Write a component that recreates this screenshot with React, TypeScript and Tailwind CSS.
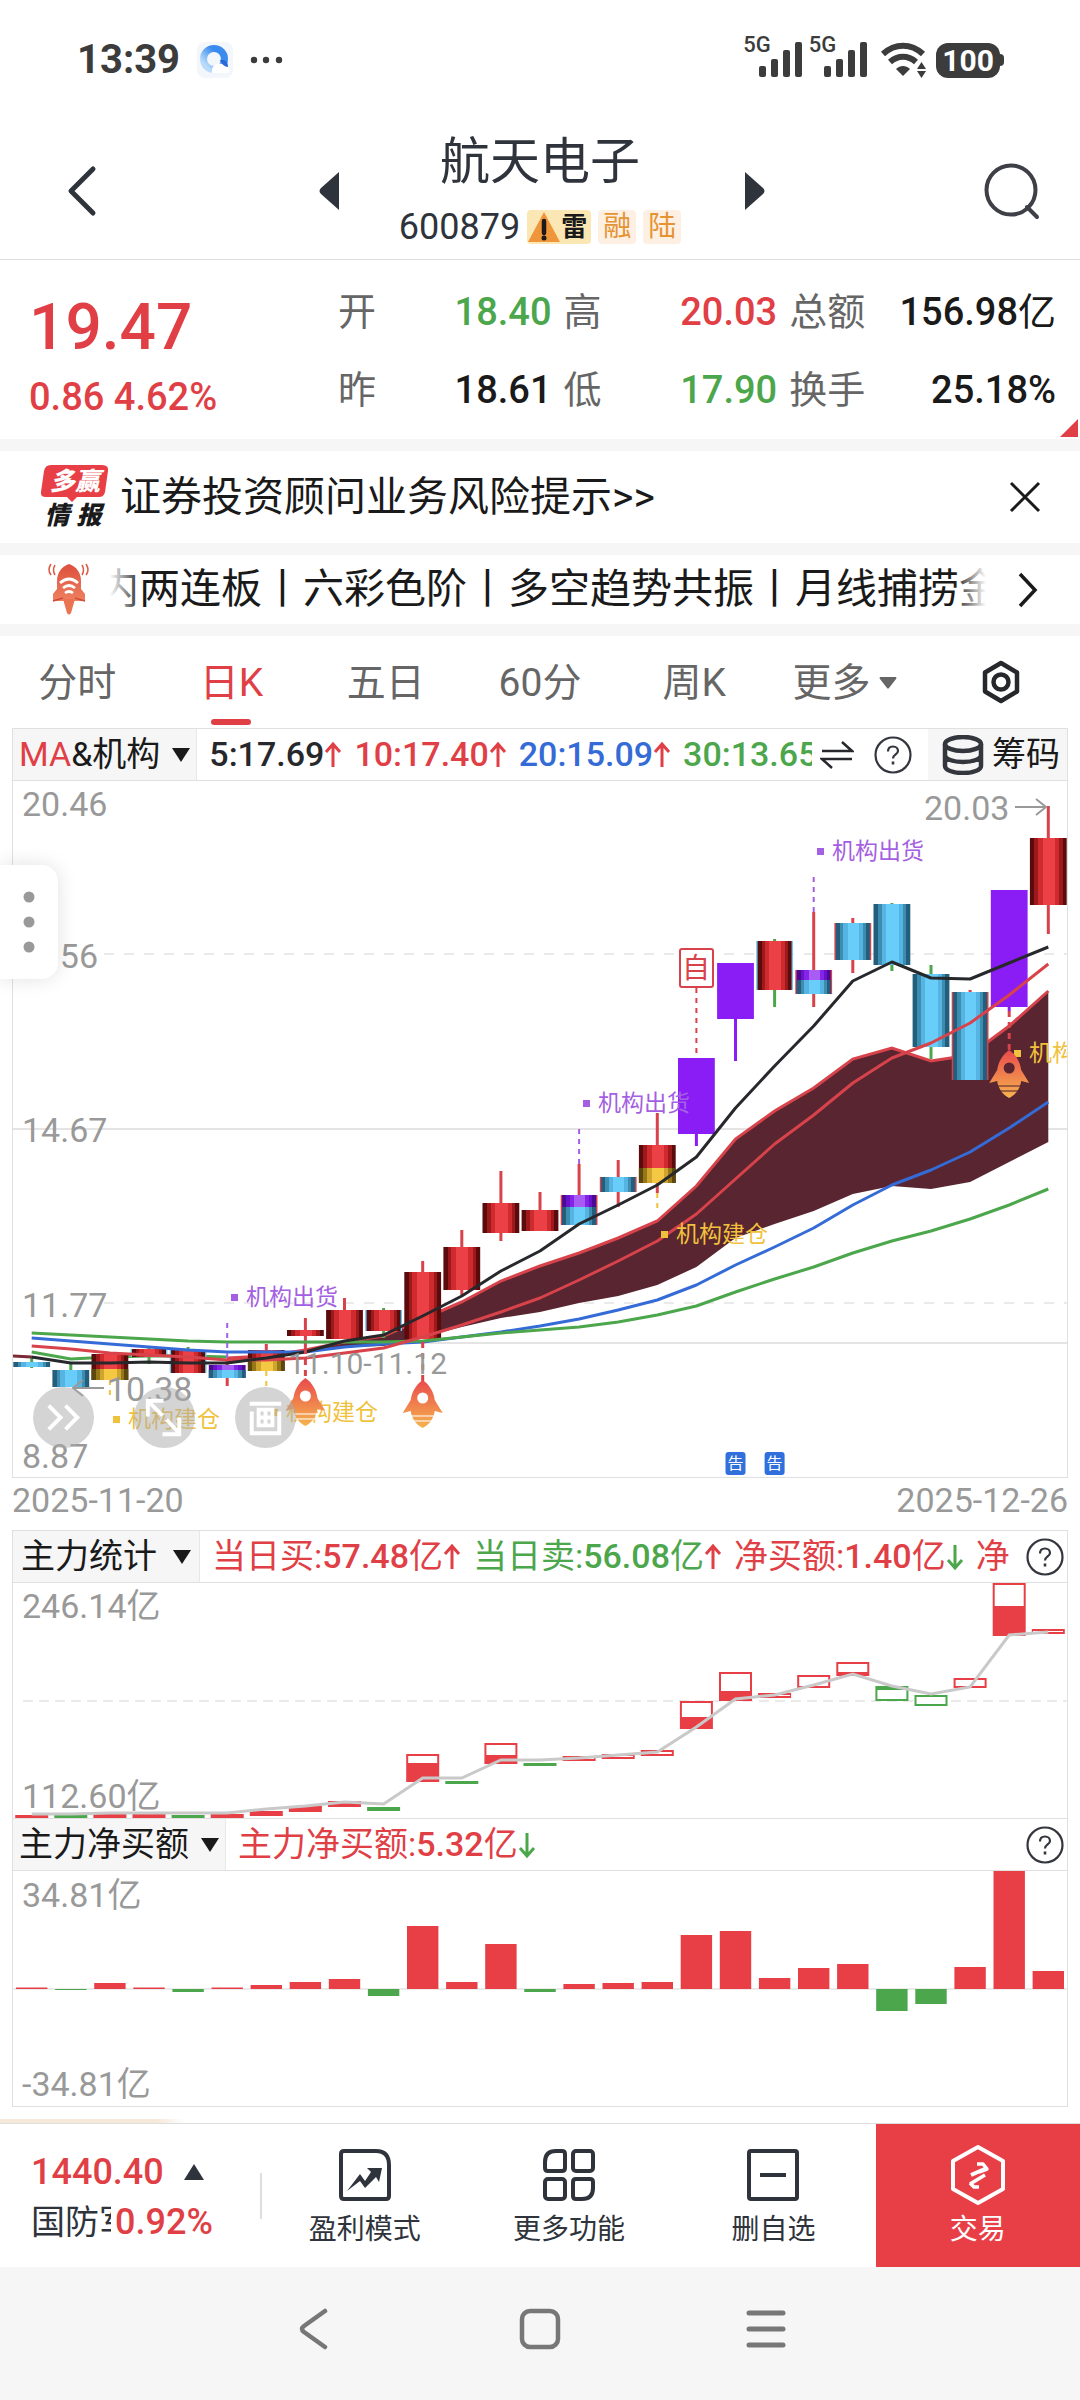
import React, { useState } from 'react';

type Tone = 'red' | 'blue' | 'purple' | 'violet' | 'yellow';

interface Candle {
  high: number;
  low: number;
  top: number;
  bottom: number;
  tone: Tone;
  wick: string;
  edge?: string;
  // Second colour block, starts at `split`
  lower?: Tone;
  split?: number;
}

interface FlowBox {
  top: number;
  bottom: number;
  up: boolean;
  fill?: [number, number];
}

const RED = '#e83f47';
const LINE_RED = '#d8434b';
const GREEN = '#4ca64c';
const BLUE = '#356bd6';
const CYAN = '#6cc8ee';
const PURPLE = '#8a1cf6';
const LILAC = '#a45fe2';
const GOLD = '#f0c13c';
const GRID = '#e4e4e4';

const FIRST_X = 31.7;
const STEP = 39.1;
const xAt = (i: number) => FIRST_X + STEP * i;

const candles: Candle[] = [
  { high: 1356, low: 1368, top: 1362, bottom: 1367, tone: 'blue', wick: GREEN },
  { high: 1362, low: 1387, top: 1370, bottom: 1387, tone: 'blue', wick: GREEN },
  { high: 1352, low: 1380, top: 1354, bottom: 1380, tone: 'red', wick: LINE_RED, lower: 'yellow', split: 1369 },
  { high: 1348, low: 1364, top: 1349, bottom: 1357, tone: 'red', wick: GREEN, edge: CYAN },
  { high: 1347, low: 1373, top: 1350, bottom: 1373, tone: 'red', wick: GREEN, edge: CYAN },
  { high: 1360, low: 1386, top: 1365, bottom: 1378, tone: 'violet', wick: LINE_RED, lower: 'blue', split: 1370 },
  { high: 1344, low: 1371, top: 1350, bottom: 1371, tone: 'red', wick: LINE_RED, lower: 'yellow', split: 1361 },
  { high: 1318, low: 1348, top: 1330, bottom: 1336, tone: 'red', wick: LINE_RED },
  { high: 1298, low: 1339, top: 1310, bottom: 1339, tone: 'red', wick: LINE_RED },
  { high: 1308, low: 1338, top: 1310, bottom: 1331, tone: 'red', wick: GREEN, edge: CYAN },
  { high: 1261, low: 1339, top: 1272, bottom: 1339, tone: 'red', wick: LINE_RED },
  { high: 1230, low: 1295, top: 1247, bottom: 1290, tone: 'red', wick: LINE_RED },
  { high: 1171, low: 1241, top: 1203, bottom: 1233, tone: 'red', wick: LINE_RED },
  { high: 1192, low: 1231, top: 1210, bottom: 1231, tone: 'red', wick: LINE_RED },
  { high: 1164, low: 1225, top: 1195, bottom: 1225, tone: 'violet', wick: LINE_RED, edge: LINE_RED, lower: 'blue', split: 1207 },
  { high: 1160, low: 1207, top: 1177, bottom: 1192, tone: 'blue', wick: LINE_RED, edge: LINE_RED },
  { high: 1113, low: 1193, top: 1145, bottom: 1183, tone: 'red', wick: LINE_RED, lower: 'yellow', split: 1168 },
  { high: 1058, low: 1146, top: 1058, bottom: 1134, tone: 'purple', wick: PURPLE },
  { high: 963, low: 1061, top: 963, bottom: 1019, tone: 'purple', wick: PURPLE },
  { high: 939, low: 1007, top: 941, bottom: 990, tone: 'red', wick: GREEN, edge: CYAN },
  { high: 912, low: 1007, top: 970, bottom: 994, tone: 'violet', wick: LINE_RED, edge: LINE_RED, lower: 'blue', split: 980 },
  { high: 918, low: 973, top: 923, bottom: 960, tone: 'blue', wick: LINE_RED, edge: LINE_RED },
  { high: 903, low: 971, top: 904, bottom: 965, tone: 'blue', wick: GREEN },
  { high: 965, low: 1059, top: 974, bottom: 1047, tone: 'blue', wick: GREEN },
  { high: 990, low: 1080, top: 992, bottom: 1080, tone: 'blue', wick: LINE_RED, edge: LINE_RED },
  { high: 890, low: 1011, top: 890, bottom: 1007, tone: 'purple', wick: PURPLE },
  { high: 806, low: 934, top: 838, bottom: 905, tone: 'red', wick: LINE_RED },
];

const ma5 = [1357, 1363, 1363, 1362, 1363, 1363, 1358, 1352, 1341, 1335, 1316, 1296, 1271, 1251, 1224, 1205, 1185, 1157, 1108, 1066, 1026, 981, 962, 978, 979, 963, 947];
const ma10 = [1346, 1349, 1353, 1355, 1357, 1360, 1360, 1358, 1353, 1348, 1337, 1325, 1312, 1298, 1280, 1261, 1241, 1214, 1179, 1144, 1115, 1083, 1058, 1043, 1023, 995, 964];
const ma20 = [1338, 1341, 1344, 1347, 1350, 1352, 1352, 1352, 1347, 1344, 1342, 1337, 1332, 1326, 1319, 1310, 1300, 1285, 1265, 1247, 1228, 1205, 1185, 1170, 1152, 1128, 1102];
const ma30 = [1333, 1335, 1337, 1339, 1341, 1342, 1342, 1342, 1342, 1342, 1341, 1337, 1333, 1330, 1327, 1322, 1315, 1306, 1292, 1279, 1267, 1253, 1241, 1231, 1219, 1205, 1189];

// The dark band starts at the sixth candle
const BAND_START = 5;
const bandTop = [1358, 1356, 1350, 1342, 1336, 1319, 1302, 1281, 1266, 1253, 1238, 1221, 1186, 1139, 1111, 1088, 1059, 1048, 1061, 1055, 1026, 991];
const bandBottom = [1363, 1358, 1353, 1347, 1346, 1337, 1327, 1318, 1312, 1303, 1296, 1285, 1267, 1238, 1224, 1211, 1194, 1186, 1189, 1182, 1162, 1142];

const flowBoxes: FlowBox[] = [
  { top: 1816, bottom: 1818, up: true, fill: [1816, 1818] },
  { top: 1815, bottom: 1818, up: false, fill: [1815, 1818] },
  { top: 1814, bottom: 1817, up: true, fill: [1814, 1817] },
  { top: 1814, bottom: 1817, up: true, fill: [1814, 1817] },
  { top: 1816, bottom: 1818, up: false, fill: [1816, 1818] },
  { top: 1815, bottom: 1817, up: true, fill: [1815, 1817] },
  { top: 1812, bottom: 1815, up: true, fill: [1812, 1815] },
  { top: 1807, bottom: 1811, up: true, fill: [1808, 1811] },
  { top: 1802, bottom: 1806, up: true, fill: [1803, 1806] },
  { top: 1808, bottom: 1810, up: false, fill: [1808, 1810] },
  { top: 1755, bottom: 1781, up: true, fill: [1763, 1781] },
  { top: 1782, bottom: 1783, up: false, fill: [1782, 1783] },
  { top: 1744, bottom: 1763, up: true, fill: [1755, 1763] },
  { top: 1764, bottom: 1765, up: false, fill: [1764, 1765] },
  { top: 1757, bottom: 1760, up: true },
  { top: 1755, bottom: 1758, up: true },
  { top: 1751, bottom: 1755, up: true },
  { top: 1702, bottom: 1728, up: true, fill: [1717, 1728] },
  { top: 1673, bottom: 1700, up: true, fill: [1691, 1700] },
  { top: 1694, bottom: 1697, up: true },
  { top: 1676, bottom: 1687, up: true },
  { top: 1663, bottom: 1675, up: true, fill: [1672, 1675] },
  { top: 1687, bottom: 1700, up: false, fill: [1687, 1690] },
  { top: 1696, bottom: 1705, up: false },
  { top: 1679, bottom: 1687, up: true },
  { top: 1584, bottom: 1635, up: true, fill: [1606, 1635] },
  { top: 1630, bottom: 1633, up: true },
];
const flowLine = [1814, 1814, 1813, 1813, 1813, 1813, 1809, 1806, 1802, 1804, 1778, 1778, 1760, 1760, 1758, 1755, 1752, 1727, 1699, 1695, 1685, 1674, 1686, 1694, 1687, 1635, 1632];

const netBars = [1.5, -1, 6, 1.5, -3, 1.5, 4, 7, 10, -7, 63, 7, 45, -3, 5, 6, 7, 54, 58, 11, 21, 25, -22, -15, 22, 118, 18];

const toPoints = (ys: number[], start = 0) => ys.map((y, i) => `${xAt(i + start)},${y}`).join(' ');
const bandShape = `${toPoints(bandTop, BAND_START)} ${bandBottom
  .map((y, i) => `${xAt(i + BAND_START)},${y}`)
  .reverse()
  .join(' ')}`;

const gradients: Record<Exclude<Tone, 'purple'>, string[]> = {
  red: ['#5c0b0d', '#9c191c', '#cf2b2e', '#ea4046'],
  blue: ['#235f7c', '#3c8db0', '#56b4e2', '#69cdfa'],
  violet: ['#4a0a96', '#6a12c8', '#8424ea', '#a85cf4'],
  yellow: ['#5c480c', '#957618', '#cfa52e', '#f4c842'],
};

const ToneGradient = ({ tone }: { tone: Exclude<Tone, 'purple'> }) => {
  const [a, b, c, d] = gradients[tone];
  const bands: [string, number, number][] = [
    [a, 0, 12], [b, 12, 22], [c, 22, 35], [d, 35, 68], [c, 68, 80], [b, 80, 89], [a, 89, 100],
  ];
  return (
    <linearGradient id={`tone-${tone}`}>
      {bands.map(([color, from, to]) => (
        <React.Fragment key={from}>
          <stop offset={`${from}%`} stopColor={color} />
          <stop offset={`${to}%`} stopColor={color} />
        </React.Fragment>
      ))}
    </linearGradient>
  );
};

const toneFill = (tone: Tone) => (tone === 'purple' ? PURPLE : `url(#tone-${tone})`);

const Signal = ({ x, y, kind }: { x: number; y: number; kind: 'buy' | 'sell' }) => (
  <g fill={kind === 'sell' ? LILAC : GOLD}>
    <rect x={x} y={y - 3} width="7" height="7" />
    <text x={x + 15} y={y + 8} fontSize="23">{kind === 'sell' ? '机构出货' : '机构建仓'}</text>
  </g>
);

const Rocket = ({ x, y, hole }: { x: number; y: number; hole: string }) => (
  <g transform={`translate(${x} ${y})`}>
    <path d="M0 -2C7 3 11 10 12 18L20 31L12 29C11 37 6 43 0 46C-6 43 -11 37 -12 29L-20 31L-12 18C-11 10 -7 3 0 -2Z" fill="url(#rocket)" />
    <circle cy="16" r="5.5" fill={hole} />
    <path d="M-12 34H12M-10 39H10" stroke={hole} strokeWidth="1.3" opacity="0.7" />
  </g>
);

const KLineChart = () => (
  <svg viewBox="13 781 1054 696" className="block h-auto w-full" role="img" aria-label="日K">
    <defs>
      <ToneGradient tone="red" />
      <ToneGradient tone="blue" />
      <ToneGradient tone="violet" />
      <ToneGradient tone="yellow" />
      <linearGradient id="rocket" x1="0" y1="0" x2="0" y2="1">
        <stop offset="0%" stopColor="#ea4a4c" />
        <stop offset="100%" stopColor="#f5b44e" />
      </linearGradient>
    </defs>

    <g stroke={GRID} strokeWidth="1.5">
      <path d="M104 954H1067M104 1303H1067" strokeDasharray="10 10" />
      <path d="M13 1129H1067M300 1343H1067" strokeWidth="2" />
    </g>

    <polygon points={bandShape} fill="#582530" />
    <polyline points={toPoints(bandTop, BAND_START)} fill="none" stroke={LINE_RED} strokeWidth="3" />
    <polyline points={toPoints([1352, 1359, 1357, 1356, 1356, 1357])} fill="none" stroke={GREEN} strokeWidth="3" />

    {candles.map((c, i) => {
      const x = xAt(i);
      const half = c.edge ? 17 : 18.4;
      return (
        <g key={i}>
          <path d={`M${x} ${c.high}V${c.low}`} stroke={c.wick} strokeWidth="3" />
          {c.edge && <rect x={x - 18.4} y={c.top} width="36.8" height={c.bottom - c.top} fill={c.edge} />}
          <rect x={x - half} y={c.top} width={half * 2} height={c.bottom - c.top} fill={toneFill(c.tone)} />
          {c.lower && c.split && (
            <rect x={x - half} y={c.split} width={half * 2} height={c.bottom - c.split} fill={toneFill(c.lower)} />
          )}
        </g>
      );
    })}

    {/* Moving averages */}
    <g fill="none" strokeWidth="3" strokeLinejoin="round">
      <path d="M13 1356L31.7 1357" stroke="#7c2a35" />
      <polyline points={toPoints(ma20)} stroke={BLUE} />
      <polyline points={toPoints(ma30)} stroke={GREEN} />
      <polyline points={toPoints(ma10)} stroke={LINE_RED} />
      <polyline points={toPoints(ma5)} stroke="#26282c" />
    </g>

    {/* Signal stems */}
    <g fill="none" strokeWidth="2" strokeDasharray="5 5">
      <path d={`M${xAt(5)} 1323V1360M${xAt(14)} 1129V1164M${xAt(20)} 877V912`} stroke={LILAC} />
      <path d={`M${xAt(2)} 1380V1395M${xAt(6)} 1371V1387M${xAt(16)} 1193V1208`} stroke={GOLD} />
      <path d={`M${xAt(17)} 988V1058`} stroke={LINE_RED} />
      <path d={`M${xAt(7)} 1348V1380M${xAt(10)} 1342V1382M${xAt(25)} 1011V1052`} stroke={LINE_RED} strokeWidth="3" strokeDasharray="6 5" />
    </g>

    <Signal x={817} y={851} kind="sell" />
    <Signal x={583} y={1103} kind="sell" />
    <Signal x={231} y={1297} kind="sell" />
    <Signal x={113} y={1419} kind="buy" />
    <Signal x={271} y={1412} kind="buy" />
    <Signal x={661} y={1234} kind="buy" />
    <Signal x={1014} y={1053} kind="buy" />

    <Rocket x={xAt(7)} y={1380} hole="#ffffff" />
    <Rocket x={xAt(10)} y={1382} hole="#ffffff" />
    <Rocket x={xAt(25)} y={1052} hole="#582530" />

    <rect x="680" y="949" width="33" height="38" rx="2" fill="#ffffff" stroke={LINE_RED} strokeWidth="2" />
    <text x="696" y="978" fontSize="28" textAnchor="middle" fill={LINE_RED}>自</text>

    {[18, 19].map((i) => (
      <g key={i}>
        <rect x={xAt(i) - 10} y="1452" width="20" height="23" rx="3" fill="#3170dc" />
        <text x={xAt(i)} y="1469" fontSize="16" textAnchor="middle" fill="#ffffff">告</text>
      </g>
    ))}

    <g fill="#999999" fontSize="34">
      <text x="22" y="816">20.46</text>
      <text x="98" y="968" textAnchor="end">17.56</text>
      <text x="22" y="1142">14.67</text>
      <text x="22" y="1317">11.77</text>
      <text x="22" y="1468">8.87</text>
      <text x="924" y="820">20.03</text>
      <text x="107" y="1401">10.38</text>
      <text x="288" y="1374" fontSize="30">11.10-11.12</text>
    </g>
    <g fill="none" stroke="#999999" strokeWidth="2">
      <path d="M1015 807H1046M1036 799L1046 807L1036 815" />
      <path d="M104 1388H73M83 1380L73 1388L83 1396" />
    </g>
  </svg>
);

const FlowChart = () => (
  <svg viewBox="13 1583 1054 235" className="block h-auto w-full" role="img" aria-label="主力统计">
    <path d="M23 1701H1067" stroke={GRID} strokeWidth="1.5" strokeDasharray="10 6" />
    <g fill="#999999" fontSize="34">
      <text x="22" y="1618">246.14亿</text>
      <text x="22" y="1808">112.60亿</text>
    </g>
    {flowBoxes.map((b, i) => {
      const color = b.up ? RED : GREEN;
      return (
        <g key={i}>
          <rect x={xAt(i) - 15.5} y={b.top} width="31" height={b.bottom - b.top} fill="#ffffff" stroke={color} strokeWidth="2" />
          {b.fill && <rect x={xAt(i) - 15.5} y={b.fill[0]} width="31" height={b.fill[1] - b.fill[0]} fill={color} />}
        </g>
      );
    })}
    <polyline points={toPoints(flowLine)} fill="none" stroke="#c9c9c9" strokeWidth="3" />
  </svg>
);

const NetChart = () => (
  <svg viewBox="13 1871 1054 235" className="block h-auto w-full" role="img" aria-label="主力净买额">
    <path d="M13 1989H1067" stroke={GRID} strokeWidth="1.5" />
    <g fill="#999999" fontSize="34">
      <text x="22" y="1907">34.81亿</text>
      <text x="22" y="2096">-34.81亿</text>
    </g>
    {netBars.map((h, i) => (
      <rect key={i} x={xAt(i) - 15.7} y={h > 0 ? 1989 - h : 1989} width="31.4" height={Math.abs(h)} fill={h > 0 ? RED : GREEN} />
    ))}
  </svg>
);

const Arrow = ({ down = false, className = '' }: { down?: boolean; className?: string }) => (
  <svg viewBox="0 0 18 28" className={`h-7 w-[18px] shrink-0 ${className}`} fill="none" stroke="currentColor" strokeWidth="3">
    {down ? <path d="M9 2V25M2 17L9 25L16 17" /> : <path d="M9 26V3M2 11L9 3L16 11" />}
  </svg>
);

const Caret = () => (
  <svg viewBox="0 0 18 14" className="h-[14px] w-[18px] shrink-0" fill="#1a1a1a">
    <path d="M0 0H18L9 14Z" />
  </svg>
);

// Name and unit are regular weight, only the figure is heavier
const Figure = ({ name = '', value, unit = '' }: { name?: string; value: string; unit?: string }) => (
  <span>{name}<span className="font-medium">{value}</span>{unit}</span>
);

const HelpButton = () => (
  <button type="button" aria-label="帮助" className="shrink-0">
    <svg viewBox="0 0 38 38" className="block size-[38px]" fill="none" stroke="#33363d" strokeWidth="2.2">
      <circle cx="19" cy="19" r="17.5" />
      <path d="M14 15.5C14 12.5 16 10.5 19 10.5S24 12.5 24 15C24 18.5 19 18.5 19 22.5" />
      <path d="M19 25.5V28.5" strokeWidth="2.6" />
    </svg>
  </button>
);

const SignalBars = () => (
  <span className="flex items-start">
    <span className="text-[22px] leading-[6px] font-medium">5G</span>
    <svg viewBox="0 0 44 36" className="-ml-3 h-9 w-11" fill="#3c3c3c">
      <rect x="0" y="24" width="7" height="11" rx="2" />
      <rect x="12" y="17" width="7" height="18" rx="2" />
      <rect x="24" y="8" width="7" height="27" rx="2" />
      <rect x="36" y="0" width="7" height="35" rx="2" />
    </svg>
  </span>
);

const StatusBar = () => (
  <div className="flex items-center justify-between pt-9 pr-[76px] pb-[50px] pl-[77px] text-[#3c3c3c]">
    <div className="flex items-center gap-[17px]">
      <span className="text-[40px] leading-[48px] font-bold">13:39</span>
      <svg viewBox="0 0 36 36" className="size-9">
        <defs>
          <linearGradient id="qring" x1="0" y1="1" x2="1" y2="0">
            <stop offset="15%" stopColor="#b9dcfb" />
            <stop offset="70%" stopColor="#3a8bee" />
          </linearGradient>
        </defs>
        <rect width="36" height="36" rx="8" fill="#f3f6fa" />
        <circle cx="17" cy="17" r="10.5" fill="none" stroke="url(#qring)" strokeWidth="7" />
        <path d="M15 31C14 25 19 20 24 22C30 21 33 26 32 31Z" fill="#ffffff" />
        <path d="M23 18C28 17 31 20 31 25C28 25 24 22 23 18Z" fill="#2a68d8" />
      </svg>
      <svg viewBox="0 0 34 8" className="h-2 w-[34px]" fill="#3c3c3c">
        <circle cx="4" cy="4" r="3.2" />
        <circle cx="16" cy="4" r="3.2" />
        <circle cx="29" cy="4" r="3.2" />
      </svg>
    </div>
    <div className="flex items-center">
      <SignalBars />
      <span className="ml-[6px]"><SignalBars /></span>
      <svg viewBox="0 0 48 36" className="ml-3 h-9 w-12" fill="none" stroke="#3c3c3c" strokeWidth="6">
        <path d="M3 12C15 1 31 1 43 12" />
        <path d="M10 20C18 13 28 13 36 20" />
        <path d="M23 34L16 27C20 23 26 23 30 27Z" fill="#3c3c3c" stroke="none" />
        <path d="M37 27L41.500 20L46 27ZM37 29L41.500 36L46 29Z" fill="#3c3c3c" stroke="none" />
      </svg>
      <span className="ml-2 rounded-xl bg-[#3c3c3c] px-[6px] text-[30px] leading-[35px] font-bold text-white">100</span>
      <span className="h-3 w-1 rounded-r bg-[#3c3c3c]" />
    </div>
  </div>
);

const StockHeader = () => (
  <header className="grid grid-cols-[1fr_auto_1fr] items-center border-b border-[#dedede] pb-[15px] text-[#2f333b]">
    <div className="flex items-center justify-between pt-1 pr-[60px] pl-[66px]">
      <button type="button" aria-label="返回">
        <svg viewBox="0 0 32 52" className="block h-[52px] w-8" fill="none" stroke="currentColor" strokeWidth="5" strokeLinecap="round" strokeLinejoin="round">
          <path d="M27 4L5 26L27 48" />
        </svg>
      </button>
      <button type="button" aria-label="上一只">
        <svg viewBox="0 0 20 40" className="block h-10 w-5" fill="currentColor">
          <path d="M20 1V39L2 23Q-1 20 2 17Z" />
        </svg>
      </button>
    </div>
    <div className="flex flex-col items-center gap-5">
      <h1 className="text-[50px] leading-[56px]">航天电子</h1>
      <div className="flex items-center gap-[7px]">
        <span className="text-4xl leading-[34px]">600879</span>
        <span className="flex h-[34px] items-center rounded-sm bg-[#fbe7b4] pr-1">
          <svg viewBox="0 0 34 34" className="h-[34px] w-[34px]">
            <path d="M17 2L33 32H1Z" fill="#f0963a" />
            <path d="M17 11V23" stroke="#1a1a1a" strokeWidth="4.5" strokeLinecap="round" />
            <circle cx="17" cy="28" r="2.5" fill="#1a1a1a" />
          </svg>
          <span className="text-[26px] font-bold text-[#1a1a1a]">雷</span>
        </span>
        <span className="h-[34px] rounded-sm bg-[#fdf0e2] px-[5px] text-[28px] leading-[34px] text-[#e69332]">融</span>
        <span className="h-[34px] rounded-sm bg-[#fdf0e2] px-[5px] text-[28px] leading-[34px] text-[#e69332]">陆</span>
      </div>
    </div>
    <div className="flex items-center justify-between pt-1 pr-10 pl-[64px]">
      <button type="button" aria-label="下一只">
        <svg viewBox="0 0 20 40" className="block h-10 w-5" fill="currentColor">
          <path d="M0 1V39L18 23Q21 20 18 17Z" />
        </svg>
      </button>
      <button type="button" aria-label="搜索">
        <svg viewBox="0 0 56 58" className="block h-[58px] w-14" fill="none" stroke="#3f4047" strokeWidth="4">
          <circle cx="27" cy="28" r="24.5" />
          <path d="M43 45L53 55" strokeLinecap="round" />
        </svg>
      </button>
    </div>
  </header>
);

const quotes = [
  { label: '开', value: '18.40', color: 'text-[#4ca64c]' },
  { label: '高', value: '20.03', color: 'text-[#e03f46]' },
  { label: '总额', value: '156.98', unit: '亿', color: 'text-[#1a1a1a]' },
  { label: '昨', value: '18.61', color: 'text-[#1a1a1a]' },
  { label: '低', value: '17.90', color: 'text-[#4ca64c]' },
  { label: '换手', value: '25.18%', color: 'text-[#1a1a1a]' },
];

const QuotePanel = () => (
  <section className="relative grid grid-cols-[32%_1fr] pt-7 pr-6 pb-[22px]">
    <div className="pt-2 pl-[29px] font-medium text-[#e03f46]">
      <p className="text-[64px] leading-[64px]">19.47</p>
      <p className="mt-[17px] text-[38px] leading-10">0.86 4.62%</p>
    </div>
    <dl className="grid grid-cols-[213fr_213fr_266fr] content-start gap-x-3 gap-y-[30px] text-[38px] leading-[48px]">
      {quotes.map((q) => (
        <div key={q.label} className="flex justify-between whitespace-nowrap">
          <dt className="text-[#666]">{q.label}</dt>
          <dd className={q.color}><Figure value={q.value} unit={q.unit} /></dd>
        </div>
      ))}
    </dl>
    <svg viewBox="0 0 18 18" className="absolute right-[2px] bottom-[2px] size-[18px]" fill="#e03f46">
      <path d="M18 0V18H0Z" />
    </svg>
  </section>
);

const NoticeRows = () => (
  <>
    <section className="flex items-center border-t-12 border-[#f6f6f6] py-[14px] pr-[38px] pl-10">
      <svg viewBox="0 0 70 64" className="h-16 w-[70px] shrink-0">
        <path d="M11 0H62Q69 0 68 6L65 27Q64 32 59 32H37L32 37L27 32H6Q0 32 1 27L4 6Q5 0 11 0Z" fill={RED} />
        <text x="35" y="25" fontSize="25" fontWeight="900" fontStyle="italic" textAnchor="middle" fill="#ffffff">多赢</text>
        <g fontSize="25" fontWeight="900" fontStyle="italic" textAnchor="middle" fill="#1a1a1a">
          <text x="17" y="59">情</text>
          <text x="49" y="59">报</text>
        </g>
      </svg>
      <a href="#risk" className="ml-[10px] flex-1 text-[41px] leading-[48px] text-[#1a1a1a]">证券投资顾问业务风险提示&gt;&gt;</a>
      <button type="button" aria-label="关闭">
        <svg viewBox="0 0 34 34" className="block size-[34px]" fill="none" stroke="#1a1a1a" strokeWidth="3">
          <path d="M3 3L31 31M31 3L3 31" />
        </svg>
      </button>
    </section>
    <section className="flex items-center border-y-12 border-[#f6f6f6] py-2 pr-[42px] pl-[46px]">
      <svg viewBox="0 0 44 53" className="h-[53px] w-11 shrink-0">
        <defs>
          <linearGradient id="hot" x1="0" y1="0" x2="0" y2="1">
            <stop offset="0%" stopColor="#dc4f3c" />
            <stop offset="100%" stopColor="#ee8160" />
          </linearGradient>
        </defs>
        <g fill="none" stroke="#dd5a45" strokeWidth="1.5">
          <path d="M9 2Q6 7 9 12M5 1Q1 7 5 12M36 2Q39 7 36 12M40 1Q44 7 40 12" />
        </g>
        <path d="M23 1C31 4 35 10 35 18V26L39 31V38H7V31L11 26V18C11 10 15 4 23 1Z" fill="url(#hot)" />
        <path d="M17 36H29L25 50Q23 53 21 50Z" fill="#ea7352" />
        <path d="M7 38L17 35M39 38L29 35" stroke="#d04a38" strokeWidth="1.5" />
        <g fill="none" stroke="#ffffff" strokeWidth="2.8">
          <path d="M14 20Q23 12 32 20M17 25Q23 20 29 25M19 30Q23 27 27 30" />
        </g>
      </svg>
      <div className="relative ml-5 min-w-0 flex-1 overflow-hidden">
        <p className="-ml-3 text-[41px] leading-[53px] whitespace-nowrap text-[#1a1a1a]">内两连板丨六彩色阶丨多空趋势共振丨月线捕捞金</p>
        <span className="absolute inset-y-0 left-0 w-8 bg-linear-to-r from-white to-transparent" />
        <span className="absolute inset-y-0 right-0 w-8 bg-linear-to-l from-white to-transparent" />
      </div>
      <button type="button" aria-label="展开" className="ml-8">
        <svg viewBox="0 0 20 36" className="block h-9 w-5" fill="none" stroke="#1a1a1a" strokeWidth="3.5">
          <path d="M2 2L17 18L2 34" />
        </svg>
      </button>
    </section>
  </>
);

const periods = ['分时', '日K', '五日', '60分', '周K'];

const PeriodTabs = () => {
  const [active, setActive] = useState('日K');

  return (
    <nav className="grid grid-cols-7 pt-6 pb-[3px] text-[39px] leading-[46px] text-[#666]">
      {periods.map((name) => (
        <button key={name} type="button" onClick={() => setActive(name)} className={`flex flex-col items-center gap-[13px] ${active === name ? 'text-[#e03f46]' : ''}`}>
          {name}
          <span className={`h-[6px] w-10 rounded-full ${active === name ? 'bg-[#e03f46]' : ''}`} />
        </button>
      ))}
      <button type="button" className="flex items-center justify-center gap-2 self-start pr-2">
        更多
        <svg viewBox="0 0 18 12" className="h-3 w-[18px]" fill="currentColor">
          <path d="M1 0H17Q18 1 17 2L10 11Q9 12 8 11L1 2Q0 1 1 0Z" />
        </svg>
      </button>
      <button type="button" aria-label="设置" className="flex justify-center self-start pr-1">
        <svg viewBox="0 0 42 44" className="h-11 w-[42px]" fill="none" stroke="#26282c" strokeWidth="4.5" strokeLinejoin="round">
          <path d="M21 3L37 12.500V31.500L21 41L5 31.500V12.500Z" />
          <circle cx="21" cy="22" r="7.5" />
        </svg>
      </button>
    </nav>
  );
};

const averages = [
  { text: '5:17.69', color: 'text-[#26282c]' },
  { text: '10:17.40', color: 'text-[#e03f46]' },
  { text: '20:15.09', color: 'text-[#356bd6]' },
  { text: '30:13.65', color: 'text-[#4ca64c]' },
];

const mainFlows = [
  { name: '当日买:', value: '57.48', color: 'text-[#e03f46]', down: false, arrow: 'text-[#e03f46]' },
  { name: '当日卖:', value: '56.08', color: 'text-[#4ca64c]', down: false, arrow: 'text-[#e03f46]' },
  { name: '净买额:', value: '1.40', color: 'text-[#e03f46]', down: true, arrow: 'text-[#4ca64c]' },
];

const floatTools = [
  { label: '展开工具', draw: <path d="M16 19L28 31L16 43M33 19L45 31L33 43" /> },
  { label: '全屏', draw: <path d="M14 30V14H30M15 15L29 29M46 31V48H29M33 33L45 46" /> },
  { label: '画线', draw: <path d="M15 17H47M17 25V47H45V25M24 23H38V39H24ZM31 23V39M24 31H38" /> },
];

const ChartPanels = () => (
  <main className="px-3">
    <section className="relative border border-[#e0e0e0]">
      <div className="flex items-stretch border-b border-[#e0e0e0] text-[34px] leading-[51px]">
        <button type="button" className="flex shrink-0 items-center gap-3 border-r border-[#e8e8e8] bg-[#f6f6f6] px-[6px] text-[#1a1a1a]">
          <span><span className="text-[#e03f46]">MA</span>&amp;机构</span>
          <Caret />
        </button>
        <div className="ml-3 flex min-w-0 flex-1 gap-3 overflow-hidden font-medium">
          {averages.map((m) => (
            <span key={m.text} className={`flex shrink-0 items-center ${m.color}`}>
              {m.text}
              <Arrow className="text-[#e03f46]" />
            </span>
          ))}
        </div>
        <div className="ml-2 flex shrink-0 items-center gap-5">
          <button type="button" aria-label="切换">
            <svg viewBox="0 0 34 30" className="block h-[30px] w-[34px]" fill="none" stroke="#26282c" strokeWidth="2.5">
              <path d="M2 11H32L22 2M32 19H2L12 28" />
            </svg>
          </button>
          <HelpButton />
        </div>
        <button type="button" className="ml-4 flex shrink-0 items-center gap-2 bg-[#f6f6f6] pr-[7px] pl-[14px] text-[#1a1a1a]">
          <svg viewBox="0 0 42 40" className="h-10 w-[42px]" fill="none" stroke="#33363d" strokeWidth="4.5">
            <ellipse cx="21" cy="9" rx="18" ry="7" />
            <path d="M3 9V31C3 35 11 38 21 38S39 35 39 31V9M3 20C3 24 11 27 21 27S39 24 39 20" />
          </svg>
          筹码
        </button>
      </div>

      <KLineChart />

      <div className="absolute bottom-[29px] left-5 flex gap-10">
        {floatTools.map((t) => (
          <button key={t.label} type="button" aria-label={t.label} className="rounded-full bg-[#aaaaaa]/50">
            <svg viewBox="0 0 62 62" className="block size-[61px]" fill="none" stroke="#ffffff" strokeWidth="4">
              {t.draw}
            </svg>
          </button>
        ))}
      </div>
      <button type="button" aria-label="更多工具" className="absolute top-[136px] -left-[13px] rounded-r-2xl bg-white py-[26px] pr-[23px] pl-[23px] shadow-[0_0_20px_rgba(0,0,0,0.12)]">
        <svg viewBox="0 0 12 62" className="block h-[62px] w-3" fill="#999999">
          <circle cx="6" cy="6" r="5.5" />
          <circle cx="6" cy="31" r="5.5" />
          <circle cx="6" cy="56" r="5.5" />
        </svg>
      </button>
    </section>

    <div className="flex justify-between pb-2 text-[34px] leading-[44px] text-[#999]">
      <time>2025-11-20</time>
      <time>2025-12-26</time>
    </div>

    <section className="border border-[#e0e0e0]">
      <div className="flex items-stretch border-b border-[#e0e0e0] text-[34px] leading-[51px]">
        <button type="button" className="flex shrink-0 items-center gap-4 border-r border-[#e8e8e8] bg-[#f6f6f6] pr-2 pl-[8px] text-[#1a1a1a]">
          主力统计
          <Caret />
        </button>
        <div className="ml-3 flex min-w-0 flex-1 gap-3 overflow-hidden">
          {mainFlows.map((f) => (
            <span key={f.name} className={`flex shrink-0 items-center ${f.color}`}>
              <Figure name={f.name} value={f.value} unit="亿" />
              <Arrow down={f.down} className={f.arrow} />
            </span>
          ))}
          <span className="text-[#e03f46]">净</span>
        </div>
        <div className="flex items-center pr-[3px] pl-3"><HelpButton /></div>
      </div>
      <FlowChart />
    </section>

    <section className="border border-t-0 border-[#e0e0e0]">
      <div className="flex items-stretch border-b border-[#e0e0e0] text-[34px] leading-[51px]">
        <button type="button" className="flex shrink-0 items-center gap-3 border-r border-[#e8e8e8] bg-[#f6f6f6] px-[6px] text-[#1a1a1a]">
          主力净买额
          <Caret />
        </button>
        <div className="ml-3 flex flex-1 items-center text-[#e03f46]">
          <Figure name="主力净买额:" value="5.32" unit="亿" />
          <Arrow down className="text-[#4ca64c]" />
        </div>
        <div className="flex items-center pr-[3px]"><HelpButton /></div>
      </div>
      <NetChart />
    </section>
  </main>
);

const bottomActions = [
  {
    label: '盈利模式',
    icon: (
      <>
        <path d="M6 3H38Q51 3 51 17V48Q51 51 48 51H6Q3 51 3 48V6Q3 3 6 3Z" />
        <path d="M9 43L22 26L27 33L33 24L29 20H44L41 34L38 29L27 40L22 33Z" fill="currentColor" stroke="none" />
      </>
    ),
  },
  {
    label: '更多功能',
    icon: (
      <>
        <path d="M14 3H20Q23 3 23 6V20Q23 23 20 23H6Q3 23 3 20V14Q3 3 14 3Z" />
        <rect x="31" y="3" width="20" height="20" rx="3" />
        <rect x="3" y="31" width="20" height="20" rx="3" />
        <path d="M34 31H48Q51 31 51 34V40Q51 51 40 51H34Q31 51 31 48V34Q31 31 34 31Z" />
      </>
    ),
  },
  {
    label: '删自选',
    icon: (
      <>
        <rect x="3" y="3" width="48" height="48" rx="2" />
        <path d="M14 27H40" />
      </>
    ),
  },
];

const BottomBar = () => (
  <footer>
    <div className="mt-3 h-1 w-[185px] bg-linear-to-r from-[#f6e9da] from-85% to-transparent" />
    <div className="grid grid-cols-[24.3%_repeat(4,1fr)] border-t border-[#dedede] text-[#2f333b]">
      <a href="#index" className="my-auto flex items-center justify-between">
        <div className="pt-[3px] pl-[31px]">
          <div className="flex items-center gap-5 text-4xl leading-[50px] font-medium text-[#e03f46]">
            1440.40
            <svg viewBox="0 0 20 16" className="h-4 w-5" fill="#2f333b">
              <path d="M10 0L20 16H0Z" />
            </svg>
          </div>
          <div className="flex items-center leading-[50px]">
            <span className="w-20 overflow-hidden text-[34px] whitespace-nowrap">国防军工</span>
            <span className="ml-1 text-4xl leading-[50px] font-medium text-[#e03f46]">0.92%</span>
          </div>
        </div>
        <span className="h-[46px] w-[2px] bg-[#dedede]" />
      </a>
      {bottomActions.map((a) => (
        <button key={a.label} type="button" className="flex flex-col items-center gap-[10px] pt-6 pb-[19px] text-[28px] leading-9">
          <svg viewBox="0 0 54 54" className="size-[54px]" fill="none" stroke="currentColor" strokeWidth="4">
            {a.icon}
          </svg>
          {a.label}
        </button>
      ))}
      <button type="button" className="flex flex-col items-center gap-[6px] bg-[#e83f47] pt-5 pb-[19px] text-[28px] leading-9 text-white">
        <svg viewBox="0 0 56 62" className="h-[62px] w-14" fill="none" stroke="currentColor" strokeWidth="4" strokeLinejoin="round">
          <path d="M28 3L53 17V45L28 59L3 45V17Z" />
          <path d="M21 31L37 24" />
          <path d="M27 20H33L37 25L29 28M35 31L20 40M20 39L24 43H29" strokeWidth="3.5" />
        </svg>
        交易
      </button>
    </div>
    <div className="flex justify-center gap-[184px] bg-[#f6f6f6] pt-[41px] pb-[50px]">
      <button type="button" aria-label="系统返回">
        <svg viewBox="0 0 42 42" className="block size-[42px]" fill="none" stroke="#777777" strokeWidth="4.5" strokeLinecap="round" strokeLinejoin="round">
          <path d="M32 3L11 18Q7 21 11 24L32 39" />
        </svg>
      </button>
      <button type="button" aria-label="主屏幕">
        <svg viewBox="0 0 42 42" className="block size-[42px]" fill="none" stroke="#777777" strokeWidth="4.5">
          <rect x="3" y="3" width="36" height="36" rx="8" />
        </svg>
      </button>
      <button type="button" aria-label="最近任务">
        <svg viewBox="0 0 42 42" className="block size-[42px]" stroke="#777777" strokeWidth="5" strokeLinecap="round">
          <path d="M4 5H38M4 21H38M4 37H38" />
        </svg>
      </button>
    </div>
  </footer>
);

const App: React.FC = () => {
  return (
    <div className="min-h-screen w-full overflow-hidden bg-white [font-family:Roboto,'Noto_Sans_CJK_SC',sans-serif]">
      <StatusBar />
      <StockHeader />
      <QuotePanel />
      <NoticeRows />
      <PeriodTabs />
      <ChartPanels />
      <BottomBar />
    </div>
  );
};

export default App;
